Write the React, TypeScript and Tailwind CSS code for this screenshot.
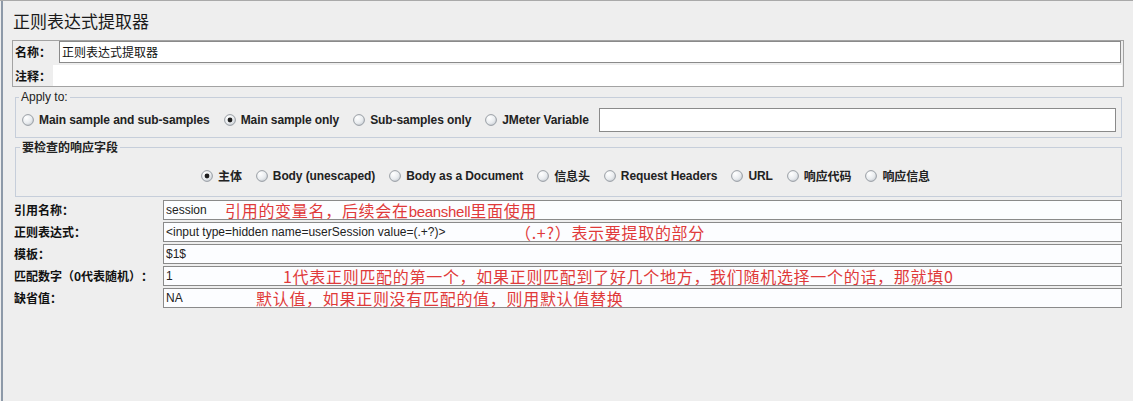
import React from "react";

const CJK = '"Noto Sans CJK SC", "Liberation Sans", sans-serif';
const LAT = '"Liberation Sans", "Noto Sans CJK SC", sans-serif';

function Radio({ checked }: { checked?: boolean }) {
  return (
    <svg width="12" height="12" viewBox="0 0 12 12" className="shrink-0">
      <defs>
        <radialGradient id="rg" cx="0.35" cy="0.3" r="0.8">
          <stop offset="0" stopColor="#ffffff" />
          <stop offset="0.6" stopColor="#e9ecef" />
          <stop offset="1" stopColor="#c4c9cf" />
        </radialGradient>
      </defs>
      <circle cx="6" cy="6" r="5.4" fill="url(#rg)" stroke="#8e959c" strokeWidth="0.9" />
      {checked && <circle cx="6" cy="6" r="2.4" fill="#1e1e1e" />}
    </svg>
  );
}

function RadioItem({ label, checked, cjk }: { label: string; checked?: boolean; cjk?: boolean }) {
  return (
    <div className="flex items-center gap-[5px]">
      <Radio checked={checked} />
      <span
        className="text-[12px] leading-[14px] font-bold tracking-[-0.1px] text-[#222]"
        style={{ fontFamily: cjk ? CJK : LAT }}
      >
        {label}
      </span>
    </div>
  );
}

function Row({
  label,
  value,
  note,
  noteLeft,
}: {
  label: string;
  value: string;
  note?: React.ReactNode;
  noteLeft?: number;
}) {
  return (
    <div className="flex h-[20px] items-center pl-[2px] pr-[2px]">
      <div
        className="w-[149px] shrink-0 whitespace-nowrap text-[12px] font-bold leading-none text-[#111] [text-spacing-trim:space-all]"
        style={{ fontFamily: CJK }}
      >
        {label}
      </div>
      <div className="relative flex h-full flex-1 items-center border border-[#8a8a8a] border-r-[#9a9a9a] bg-[#fcfdff] pl-[2px]">
        <span
          className="whitespace-nowrap text-[12px] leading-none text-[#222]"
          style={{ fontFamily: LAT }}
        >
          {value}
        </span>
        {note && (
          <span
            className="absolute top-[0px] whitespace-nowrap text-[16px] leading-[18px] tracking-[0.7px] text-[#e03a3a] [text-spacing-trim:space-all]"
            style={{ left: noteLeft, fontFamily: CJK }}
          >
            {note}
          </span>
        )}
      </div>
    </div>
  );
}

export default function App() {
  return (
    <div className="h-[401px] w-[1133px] overflow-hidden border-t border-[#a9a9a9] bg-[#eeeeee]">
      <div className="ml-[1px] h-full border-l-2 border-[#8d99a8] pl-[9px] pr-[9px]">
        {/* Title */}
        <div className="flex h-[39px] items-center pl-[1px]">
          <span className="text-[17px] leading-none text-[#1a1a1a]" style={{ fontFamily: CJK }}>
            正则表达式提取器
          </span>
        </div>

        {/* Name / comment panel */}
        <div className="w-[1112px] border border-[#a3a3a3] pl-[2px] pr-[1px]">
          <div className="flex h-[22px] items-center">
            <div
              className="w-[44px] shrink-0 text-[12px] font-bold leading-none text-[#111]"
              style={{ fontFamily: CJK }}
            >
              名称：
            </div>
            <div className="mr-[1px] flex h-full flex-1 items-center border border-[#8a8a8a] bg-white pl-[2px]">
              <span className="text-[12px] leading-none text-[#111]" style={{ fontFamily: CJK }}>
                正则表达式提取器
              </span>
            </div>
          </div>
          <div className="mt-[2px] flex h-[21px] items-center">
            <div
              className="w-[38px] shrink-0 text-[12px] font-bold leading-none text-[#111]"
              style={{ fontFamily: CJK }}
            >
              注释：
            </div>
            <div className="h-full flex-1 bg-white" />
          </div>
        </div>

        {/* Apply to */}
        <fieldset className="ml-[3px] mr-[2px] mt-[3px] border border-[#c6ceda] p-0">
          <legend
            className="ml-[3px] px-[2px] text-[12px] leading-[14px] text-[#222]"
            style={{ fontFamily: LAT }}
          >
            Apply to:
          </legend>
          <div className="flex items-center pb-[5px] pl-[6px] pr-[5px] pt-[4px]">
            <div className="flex items-center gap-[14px]">
              <RadioItem label="Main sample and sub-samples" />
              <RadioItem label="Main sample only" checked />
              <RadioItem label="Sub-samples only" />
              <RadioItem label="JMeter Variable" />
            </div>
            <div className="ml-auto h-[24px] w-[517px] border border-[#8a8a8a] bg-white" />
          </div>
        </fieldset>

        {/* Field to check */}
        <fieldset className="ml-[3px] mr-[2px] mt-[2px] border border-[#c6ceda] p-0">
          <legend
            className="ml-[4px] px-[2px] text-[12px] font-bold leading-[14px] text-[#222]"
            style={{ fontFamily: CJK }}
          >
            要检查的响应字段
          </legend>
          <div className="mb-[13px] mt-[15px] flex h-[14px] items-center justify-center gap-[14px] pr-[6px]">
            <RadioItem label="主体" checked cjk />
            <RadioItem label="Body (unescaped)" />
            <RadioItem label="Body as a Document" />
            <RadioItem label="信息头" cjk />
            <RadioItem label="Request Headers" />
            <RadioItem label="URL" />
            <RadioItem label="响应代码" cjk />
            <RadioItem label="响应信息" cjk />
          </div>
        </fieldset>

        {/* Rows */}
        <div className="mt-[3px] flex flex-col gap-[2px]">
          <Row
            label="引用名称："
            value="session"
            note={
              <>
                引用的变量名，后续会在
                <span className="text-[15px] tracking-[-0.3px]" style={{ fontFamily: LAT }}>
                  beanshell
                </span>
                里面使用
              </>
            }
            noteLeft={61}
          />
          <Row
            label="正则表达式："
            value="<input type=hidden name=userSession value=(.+?)>"
            note="（.+?）表示要提取的部分"
            noteLeft={351}
          />
          <Row label="模板：" value="$1$" />
          <Row
            label="匹配数字（0代表随机）："
            value="1"
            note="1代表正则匹配的第一个，如果正则匹配到了好几个地方，我们随机选择一个的话，那就填0"
            noteLeft={119}
          />
          <Row label="缺省值：" value="NA" note="默认值，如果正则没有匹配的值，则用默认值替换" noteLeft={92} />
        </div>
      </div>
    </div>
  );
}
